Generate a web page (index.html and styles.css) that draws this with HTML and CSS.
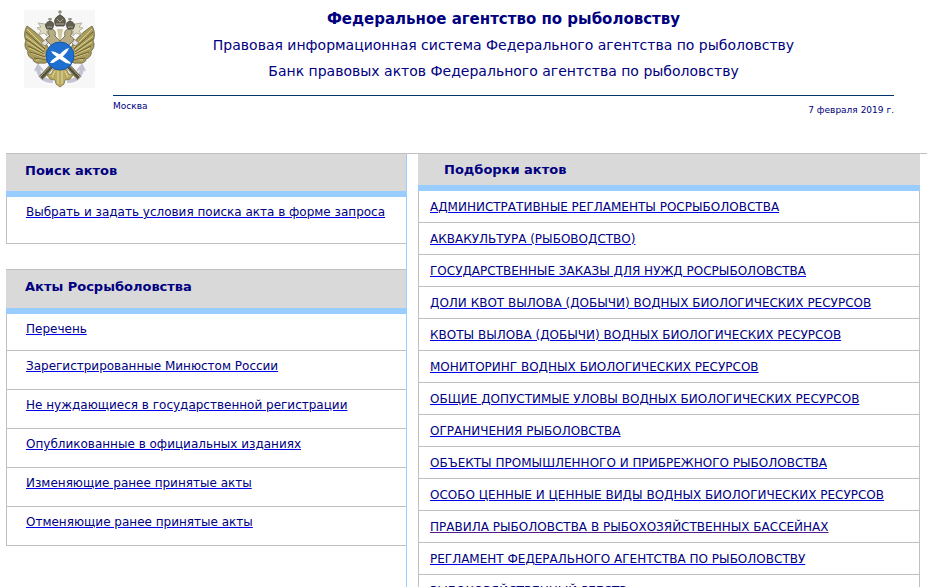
FILE: index.html
```html
<!DOCTYPE html>
<html lang="ru">
<head>
  <meta charset="UTF-8">
  <meta name="viewport" content="width=device-width, initial-scale=1.0">
  <title>Федеральное агентство по рыболовству</title>
  <link rel="stylesheet" href="styles.css">
</head>
<body>
  <header class="header">
    <svg class="emblem" viewBox="0 0 71 78" role="img" aria-label="Герб">
      <rect width="71" height="78" fill="#f7f7f7"/>
      <!-- якоря -->
      <g fill="none" stroke="#c4c3d1" stroke-width="4">
        <path d="M14 56C14 66 19 71 29 71M58 56C58 66 53 71 43 71"/>
        <path d="M11 61L14 55L19 61M61 61L58 55L53 61" stroke-width="2"/>
      </g>
      <path d="M17 68L29 55M55 68L43 55" stroke="#55523f" stroke-width="5"/>
      <path d="M16 67L28 54M56 67L44 54M19 69L30 57M53 69L42 57" stroke="#b7ae80" stroke-width="1"/>
      <!-- крылья -->
      <g fill="#a89c5c" stroke="#5a5230" stroke-width="0.7">
        <path d="M26 42C23 32 15 24 3 16C0 21 0 27 2 31C0 34 1 39 4 41C3 44 5 48 9 49C9 52 13 54 17 53C21 54 25 52 27 49Z"/>
        <path d="M46 42C48 32 56 24 68 16C71 21 71 27 69 31C71 34 70 39 67 41C68 44 66 48 62 49C62 52 58 54 54 53C50 54 47 52 45 49Z"/>
      </g>
      <g fill="none" stroke="#ddd38f" stroke-width="1">
        <path d="M3 19L21 37M2 26L20 40M3 32L20 43M5 38L21 45M7 43L22 48M12 50L24 49"/>
        <path d="M68 19L50 37M69 26L51 40M68 32L51 43M66 38L50 45M64 43L49 48M59 50L47 49"/>
      </g>
      <g fill="none" stroke="#5a4d23" stroke-width="0.8">
        <path d="M2 22L21 39M2 29L20 42M4 36L20 44M6 42L21 47M10 48L23 50"/>
        <path d="M69 22L50 39M69 29L51 42M67 36L51 44M65 42L50 47M61 48L48 50"/>
      </g>
      <!-- лапы у щита -->
      <path d="M17 33L22 29L25 32L21 36ZM55 33L50 29L47 32L51 36Z" fill="#e4dfe4" stroke="#77705c" stroke-width="0.7"/>
      <!-- ленты -->
      <g fill="#dedbc2" stroke="#aaa588" stroke-width="0.8">
        <path d="M21 14L14 13L17 17L13 18L17 21L14 25L20 23L23 26L23 19Z"/>
        <path d="M51 14L58 13L55 17L59 18L55 21L58 25L52 23L49 26L49 19Z"/>
      </g>
      <!-- головы и шеи -->
      <path d="M32 40L25 33C21 31 22 27 26 26C23 24 23 19 27 19C31 19 32 23 31 26L36 31L41 26C40 23 41 19 45 19C49 19 49 24 46 26C50 27 51 31 47 33L40 40Z" fill="#b6ad84" stroke="#57512f" stroke-width="0.7"/>
      <path d="M33 19H39L37 30H35Z" fill="#cfc79e"/>
      <!-- короны -->
      <g fill="#625f53" stroke="#3a382f" stroke-width="0.7">
        <path d="M32 16C29 11 31 7 36 5C41 7 43 11 40 16Z"/>
        <path d="M23 19C20 15 22 12 26 11C30 12 31 15 28 19Z"/>
        <path d="M44 19C41 15 42 12 46 11C50 12 52 15 49 19Z"/>
      </g>
      <path d="M36 0V5M34 2H38M26 8V11M24 9H28M46 8V11M44 9H48" stroke="#77725a" stroke-width="1"/>
      <path d="M32 14H40M23 17H28M44 17H49M33 9L36 12L39 9" fill="none" stroke="#aaa58c"/>
      <!-- хвост -->
      <path d="M30 59L27 64L23 65L26 69L31 70L32 74L36 77L40 74L41 70L46 69L49 65L45 64L42 59Z" fill="#b8aa60" stroke="#746733" stroke-width="0.7"/>
      <path d="M31 61L28 67M34 61V74M38 61V74M41 61L44 67" stroke="#e4dca6"/>
      <circle cx="36" cy="46" r="14" fill="#1f6fd0" stroke="#1a55a6" stroke-width="1"/>
      <!-- самолёт и рыба -->
      <path d="M45 38C41 39 38 42 35 45L28 50L26 53L29 53L37 48C41 45 44 41 45 38Z" fill="#fff"/>
      <path d="M27 41L31 42L37 45L46 52L47 54L42 53L34 48L29 44Z" fill="#fff"/>
    </svg>
    <div class="header-main">
      <h1>Федеральное агентство по рыболовству</h1>
      <p>Правовая информационная система Федерального агентства по рыболовству</p>
      <p>Банк правовых актов Федерального агентства по рыболовству</p>
      <div class="header-info">
        <span>Москва</span>
        <span class="date">7 февраля 2019 г.</span>
      </div>
    </div>
  </header>

  <main class="content">
    <div class="left">
      <section class="block search">
        <h2>Поиск актов</h2>
        <ul>
          <li><a href="#">Выбрать и задать условия поиска акта в форме запроса</a></li>
        </ul>
      </section>
      <section class="block acts">
        <h2>Акты Росрыболовства</h2>
        <ul>
          <li><a href="#">Перечень</a></li>
          <li><a href="#">Зарегистрированные Минюстом России</a></li>
          <li><a href="#">Не нуждающиеся в государственной регистрации</a></li>
          <li><a href="#">Опубликованные в официальных изданиях</a></li>
          <li><a href="#">Изменяющие ранее принятые акты</a></li>
          <li><a href="#">Отменяющие ранее принятые акты</a></li>
        </ul>
      </section>
    </div>

    <section class="block right">
      <h2>Подборки актов</h2>
      <ul>
        <li><a href="#">АДМИНИСТРАТИВНЫЕ РЕГЛАМЕНТЫ РОСРЫБОЛОВСТВА</a></li>
        <li><a href="#">АКВАКУЛЬТУРА (РЫБОВОДСТВО)</a></li>
        <li><a href="#">ГОСУДАРСТВЕННЫЕ ЗАКАЗЫ ДЛЯ НУЖД РОСРЫБОЛОВСТВА</a></li>
        <li><a href="#">ДОЛИ КВОТ ВЫЛОВА (ДОБЫЧИ) ВОДНЫХ БИОЛОГИЧЕСКИХ РЕСУРСОВ</a></li>
        <li><a href="#">КВОТЫ ВЫЛОВА (ДОБЫЧИ) ВОДНЫХ БИОЛОГИЧЕСКИХ РЕСУРСОВ</a></li>
        <li><a href="#">МОНИТОРИНГ ВОДНЫХ БИОЛОГИЧЕСКИХ РЕСУРСОВ</a></li>
        <li><a href="#">ОБЩИЕ ДОПУСТИМЫЕ УЛОВЫ ВОДНЫХ БИОЛОГИЧЕСКИХ РЕСУРСОВ</a></li>
        <li><a href="#">ОГРАНИЧЕНИЯ РЫБОЛОВСТВА</a></li>
        <li><a href="#">ОБЪЕКТЫ ПРОМЫШЛЕННОГО И ПРИБРЕЖНОГО РЫБОЛОВСТВА</a></li>
        <li><a href="#">ОСОБО ЦЕННЫЕ И ЦЕННЫЕ ВИДЫ ВОДНЫХ БИОЛОГИЧЕСКИХ РЕСУРСОВ</a></li>
        <li><a href="#" class="visited">ПРАВИЛА РЫБОЛОВСТВА В РЫБОХОЗЯЙСТВЕННЫХ БАССЕЙНАХ</a></li>
        <li><a href="#">РЕГЛАМЕНТ ФЕДЕРАЛЬНОГО АГЕНТСТВА ПО РЫБОЛОВСТВУ</a></li>
        <li><a href="#">РЫБОХОЗЯЙСТВЕННЫЙ РЕЕСТР</a></li>
      </ul>
    </section>
  </main>
</body>
</html>
```
FILE: styles.css
```css
* {
  box-sizing: border-box;
}
html {
  overflow-x: hidden;
  scrollbar-width: none;
}
body {
  margin: 0;
  font-family: Verdana, "DejaVu Sans", sans-serif;
  font-size: 12px;
  color: #000080;
  background: #fff;
}
h1, h2, p, ul {
  margin: 0;
  padding: 0;
}
ul {
  list-style: none;
}
.header {
  display: flex;
  align-items: flex-start;
  gap: 18px;
  padding: 6px 40px 0 24px;
}
.emblem {
  width: 71px;
  height: 78px;
  margin-top: 4px;
  flex-shrink: 0;
}
.header-main {
  flex: 1;
  text-align: center;
}
.header-main h1,
.header-main p {
  font-size: 15px;
  line-height: 26px;
}
.header-main p {
  font-size: 14px;
}
.header-info {
  display: flex;
  justify-content: space-between;
  margin-top: 11px;
  padding-top: 4px;
  border-top: 1px solid #003366;
  font-size: 9px;
  line-height: 12px;
}
.date {
  margin-top: 4px;
}
.content {
  display: grid;
  grid-template-columns: 401fr 502fr;
  column-gap: 11px;
  margin: 37px 7px 0 6px;
  padding-right: 7px;
  border-top: 1px solid #c0c0c0;
}
.left {
  border-right: 1px solid #99ccff;
}
.block h2 {
  padding: 8px 19px 11px;
  border-bottom: 6px solid #99ccff;
  background: #d9d9d9;
  font-size: 13px;
  line-height: 18px;
}
.block li {
  border-bottom: 1px solid #c0c0c0;
  border-left: 1px solid #c0c0c0;
  line-height: 16px;
}
.block a {
  color: #000080;
  text-decoration: underline #0000ee;
}
.block a.visited {
  text-decoration-color: #551a8b;
}
.search li {
  padding: 7px 19px 23px;
}
.acts {
  margin-top: 25px;
  border-top: 1px solid #c0c0c0;
}
.acts h2 {
  padding-bottom: 12px;
}
.acts li {
  padding: 7px 19px 15px;
}
.acts li:first-child {
  padding-bottom: 13px;
}
.right h2 {
  padding: 7px 26px 6px;
}
.right li {
  padding: 8px 11px 7px;
  border-right: 1px solid #c0c0c0;
}
```
